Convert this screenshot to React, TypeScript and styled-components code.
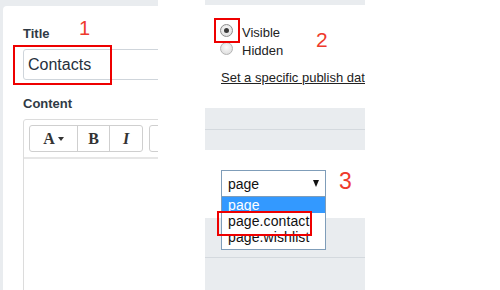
import React from 'react'
import styled, { createGlobalStyle } from 'styled-components'

const GlobalStyle = createGlobalStyle`
  html, body {
    margin: 0;
    padding: 0;
    background: #fff;
  }
  body {
    font-family: 'Liberation Sans', Arial, sans-serif;
    color: #333;
  }
`

const Page = styled.div`
  position: relative;
  display: flex;
  width: 500px;
  height: 290px;
  overflow: hidden;
  background: #fff;
`

// left crop: the page editor form
const EditorPane = styled.div`
  flex: none;
  width: 158px;
  height: 100%;
  box-sizing: border-box;
  padding: 6px 0 0 3px;
  background: #e9ecef;
`

const Card = styled.div`
  height: 100%;
  box-sizing: border-box;
  padding: 18px 0 0 20px;
  background: #fff;
  border-top-left-radius: 4px;
  overflow: hidden;
`

const Label = styled.label<{ $gap?: number }>`
  display: block;
  margin-top: ${p => p.$gap ?? 0}px;
  font-size: 13px;
  line-height: 19px;
  font-weight: 700;
  color: #2f3a45;
`

const TextInput = styled.div`
  box-sizing: border-box;
  width: 220px;
  height: 31px;
  margin-top: 6px;
  padding: 0 4px;
  display: flex;
  align-items: center;
  border: 1px solid #cfd5db;
  border-radius: 3px;
  font-size: 16px;
  color: #26303c;
`

const Editor = styled.div`
  width: 220px;
  height: 200px;
  margin-top: 6px;
  border: 1px solid #dcdcdc;
  border-radius: 3px 0 0 0;
`

const Toolbar = styled.div`
  display: flex;
  gap: 6px;
  padding: 5px;
  border-bottom: 2px solid #e6e6e6;
`

const ButtonGroup = styled.div`
  display: flex;
  height: 27px;
  box-sizing: border-box;
  border: 1px solid #cfcfcf;
  border-radius: 3px;
`

const ToolButton = styled.div<{ $w: number; $italic?: boolean }>`
  width: ${p => p.$w}px;
  box-sizing: border-box;
  display: flex;
  align-items: center;
  justify-content: center;
  gap: 3px;
  font-family: 'Liberation Serif', 'Times New Roman', serif;
  font-size: 16px;
  font-weight: 700;
  font-style: ${p => (p.$italic ? 'italic' : 'normal')};
  color: #333;
  & + & {
    border-left: 1px solid #cfcfcf;
  }
`

const Caret = styled.span`
  width: 0;
  height: 0;
  border-left: 3px solid transparent;
  border-right: 3px solid transparent;
  border-top: 4px solid #333;
`

const Dots = styled.div`
  display: flex;
  flex-direction: column;
  gap: 2px;
  padding: 6px 0 0 9px;
  span {
    width: 2px;
    height: 2px;
    background: #444;
  }
`

const Spacer = styled.div`
  flex: none;
  width: 47px;
`

// right crops: publish settings and template select
const SideColumn = styled.div`
  flex: none;
  width: 160px;
  height: 100%;
  display: flex;
  flex-direction: column;
  padding-top: 5px;
  box-sizing: border-box;
  background: #e9ecef;
  overflow: hidden;
`

const Section = styled.div<{ $h: number; $top: number }>`
  position: relative;
  z-index: 1;
  flex: none;
  height: ${p => p.$h}px;
  box-sizing: border-box;
  padding: ${p => p.$top}px 0 0 16px;
  background: #fff;
  white-space: nowrap;
  font-size: 13px;
  line-height: 18px;
`

const Band = styled.div<{ $h: number; $line: number }>`
  flex: none;
  height: ${p => p.$h}px;
  box-sizing: border-box;
  padding-top: ${p => p.$line}px;
  &::before {
    content: '';
    display: block;
    height: 1px;
    background: #d4d9de;
  }
`

const RadioRow = styled.div`
  display: flex;
  align-items: flex-start;
  gap: 9px;
  margin-left: -1px;
  color: #222;
`

const Radio = styled.span<{ $checked?: boolean }>`
  flex: none;
  position: relative;
  width: 13px;
  height: 13px;
  box-sizing: border-box;
  border-radius: 50%;
  border: 1px solid ${p => (p.$checked ? '#8e8e8e' : '#b4b4b4')};
  background: radial-gradient(circle at 50% 40%, #fbfbfb 0%, #e2e2e2 70%, #d2d2d2 100%);
  &::after {
    content: '';
    display: ${p => (p.$checked ? 'block' : 'none')};
    position: absolute;
    left: 3px;
    top: 3px;
    width: 5px;
    height: 5px;
    border-radius: 50%;
    background: #3a3a3a;
  }
`

const PublishLink = styled.a`
  display: block;
  margin-top: 9px;
  color: #222;
  text-decoration: underline;
`

const SelectWrap = styled.div`
  position: relative;
  width: 105px;
`

const SelectBox = styled.div`
  box-sizing: border-box;
  height: 27px;
  display: flex;
  align-items: center;
  justify-content: space-between;
  padding: 0 6px 0 6px;
  border: 1px solid #7f9db9;
  background: #fff;
  font-size: 14px;
  color: #111;
`

const Arrow = styled.span`
  width: 0;
  height: 0;
  border-left: 3.5px solid transparent;
  border-right: 3.5px solid transparent;
  border-top: 7px solid #111;
`

const OptionList = styled.div`
  position: absolute;
  left: 0;
  top: 27px;
  width: 105px;
  height: 53px;
  box-sizing: border-box;
  border: 1px solid #7f9db9;
  border-top: none;
  background: #fff;
  overflow: hidden;
  z-index: 2;
`

const Option = styled.div<{ $active?: boolean }>`
  height: 16px;
  line-height: 17px;
  padding-left: 6px;
  font-size: 14px;
  letter-spacing: 0.1px;
  overflow: hidden;
  color: ${p => (p.$active ? '#fff' : '#111')};
  background: ${p => (p.$active ? '#3399ff' : 'transparent')};
`

// annotations drawn on top of the screenshot
const Marker = styled.div<{ $x: number; $y: number; $w: number; $h: number }>`
  position: absolute;
  left: ${p => p.$x}px;
  top: ${p => p.$y}px;
  width: ${p => p.$w}px;
  height: ${p => p.$h}px;
  box-sizing: border-box;
  border: 2px solid #ee0000;
  z-index: 5;
`

const StepNumber = styled.div<{ $x: number; $y: number; $size: number }>`
  position: absolute;
  left: ${p => p.$x}px;
  top: ${p => p.$y}px;
  font-size: ${p => p.$size}px;
  line-height: 1;
  color: #ee3a2c;
  z-index: 5;
`

const App: React.FC = () => {
  return (
    <>
      <GlobalStyle />
      <Page>
        <EditorPane>
          <Card>
            <Label>Title</Label>
            <TextInput>Contacts</TextInput>
            <Label $gap={14}>Content</Label>
            <Editor>
              <Toolbar>
                <ButtonGroup>
                  <ToolButton $w={47}>
                    A<Caret />
                  </ToolButton>
                  <ToolButton $w={32}>B</ToolButton>
                  <ToolButton $w={33} $italic>
                    I
                  </ToolButton>
                </ButtonGroup>
                <ButtonGroup>
                  <Dots>
                    <span />
                    <span />
                    <span />
                  </Dots>
                </ButtonGroup>
              </Toolbar>
            </Editor>
          </Card>
        </EditorPane>

        <Spacer />

        <SideColumn>
          <Section $h={103} $top={19}>
            <RadioRow>
              <Radio $checked />
              Visible
            </RadioRow>
            <RadioRow>
              <Radio />
              Hidden
            </RadioRow>
            <PublishLink>Set a specific publish date</PublishLink>
          </Section>
          <Band $h={42} $line={21} />
          <Section $h={68} $top={20}>
            <SelectWrap>
              <SelectBox>
                page
                <Arrow />
              </SelectBox>
              <OptionList>
                <Option $active>page</Option>
                <Option>page.contact</Option>
                <Option>page.wishlist</Option>
              </OptionList>
            </SelectWrap>
          </Section>
          <Band $h={72} $line={39} />
        </SideColumn>

        <Marker $x={13} $y={45} $w={99} $h={40} />
        <StepNumber $x={79} $y={18} $size={20}>1</StepNumber>
        <Marker $x={214} $y={18} $w={26} $h={25} />
        <StepNumber $x={316} $y={29} $size={21}>2</StepNumber>
        <Marker $x={217} $y={211} $w={95} $h={25} />
        <StepNumber $x={339} $y={170} $size={23}>3</StepNumber>
      </Page>
    </>
  )
}

export default App
